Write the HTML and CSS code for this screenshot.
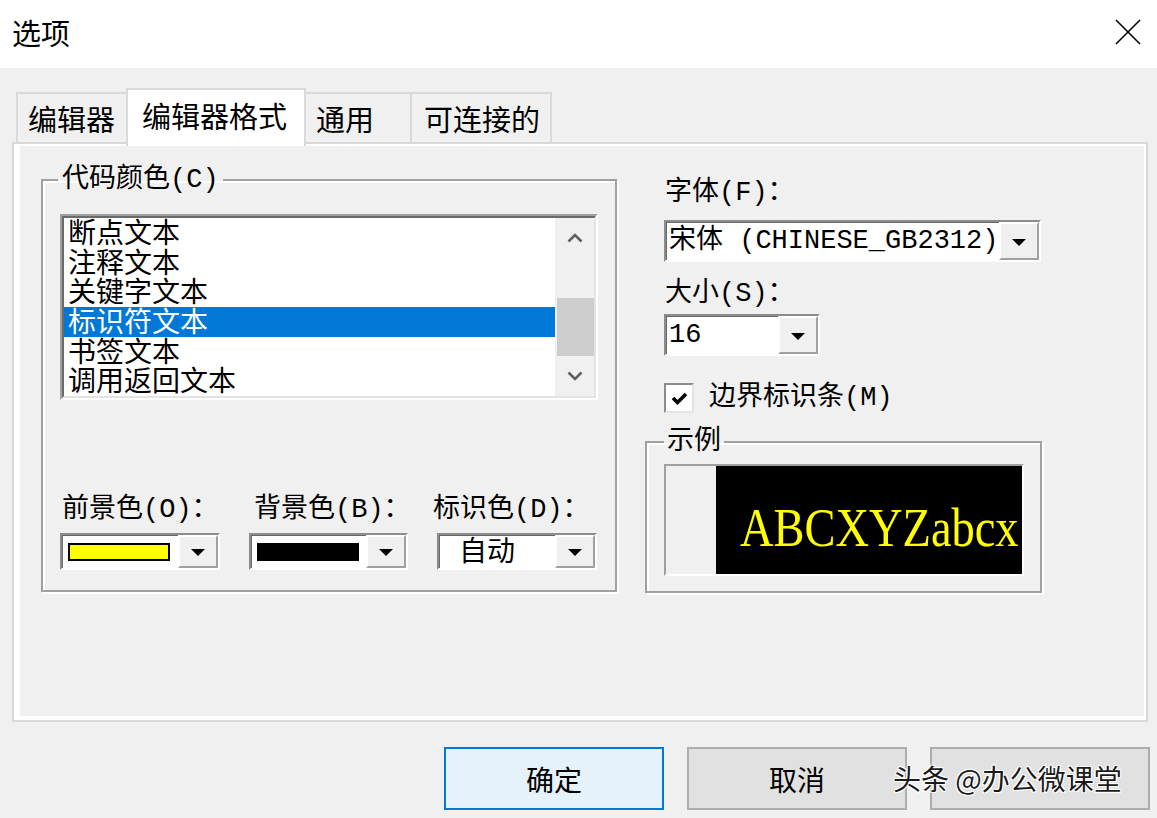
FILE: index.html
```html
<!DOCTYPE html>
<html lang="zh-CN">
<head>
    <meta charset="UTF-8">
    <meta name="viewport" content="width=device-width, initial-scale=1.0">
    <title>选项</title>
    <link rel="stylesheet" href="styles.css">
</head>
<body>
    <div class="titlebar">
        <span class="title">选项</span>
        <svg class="close" width="26" height="26" viewBox="0 0 26 26">
            <path d="M1 1L25 25M25 1L1 25" stroke="#000" stroke-width="1.6" fill="none"/>
        </svg>
    </div>

    <div class="tabs">
        <div class="tab tab-1">编辑器</div>
        <div class="tab tab-2 active">编辑器格式</div>
        <div class="tab tab-3">通用</div>
        <div class="tab tab-4">可连接的</div>
    </div>

    <div class="panel">
        <div class="panel-inner">
            <fieldset class="group code-colors">
                <legend>代码颜色(C)</legend>

                <div class="sunken listbox">
                    <div class="sunken-inner list-body">
                        <ul class="items">
                            <li>断点文本</li>
                            <li>注释文本</li>
                            <li>关键字文本</li>
                            <li class="selected">标识符文本</li>
                            <li>书签文本</li>
                            <li>调用返回文本</li>
                        </ul>
                        <div class="scrollbar">
                            <div class="arrow">
                                <svg width="16" height="10" viewBox="0 0 16 10"><polyline points="1.5,8.5 8,2 14.5,8.5" fill="none" stroke="#606060" stroke-width="2.6"/></svg>
                            </div>
                            <div class="track"><div class="thumb"></div></div>
                            <div class="arrow">
                                <svg width="16" height="10" viewBox="0 0 16 10"><polyline points="1.5,1.5 8,8 14.5,1.5" fill="none" stroke="#606060" stroke-width="2.6"/></svg>
                            </div>
                        </div>
                    </div>
                </div>

                <div class="color-row">
                    <div class="color-col">
                        <div class="field-label">前景色(O)：</div>
                        <div class="combo">
                            <div class="combo-value"><span class="swatch swatch-yellow"></span></div>
                            <div class="drop"><span class="tri"></span></div>
                        </div>
                    </div>
                    <div class="color-col">
                        <div class="field-label shift-right">背景色(B)：</div>
                        <div class="combo">
                            <div class="combo-value"><span class="swatch swatch-black"></span></div>
                            <div class="drop"><span class="tri"></span></div>
                        </div>
                    </div>
                    <div class="color-col">
                        <div class="field-label shift-left">标识色(D)：</div>
                        <div class="combo">
                            <div class="combo-value auto">自动</div>
                            <div class="drop"><span class="tri"></span></div>
                        </div>
                    </div>
                </div>
            </fieldset>

            <div class="right-col">
                <div class="field-label indent">字体(F)：</div>
                <div class="combo combo-font">
                    <div class="combo-value text">宋体 (CHINESE_GB2312)</div>
                    <div class="drop"><span class="tri"></span></div>
                </div>

                <div class="field-label indent size-label">大小(S)：</div>
                <div class="combo combo-size">
                    <div class="combo-value text">16</div>
                    <div class="drop"><span class="tri"></span></div>
                </div>

                <div class="check-row">
                    <div class="checkbox">
                        <svg width="17" height="15" viewBox="0 0 17 15"><polyline points="2,7 6.5,11.5 15,3" fill="none" stroke="#000" stroke-width="3.6"/></svg>
                    </div>
                    <span class="check-label">边界标识条(M)</span>
                </div>

                <fieldset class="group sample">
                    <legend>示例</legend>
                    <div class="preview">
                        <div class="gutter"></div>
                        <div class="sample-text"><span>ABCXYZabcx</span></div>
                    </div>
                </fieldset>
            </div>
        </div>
    </div>

    <div class="buttons">
        <button class="btn primary">确定</button>
        <button class="btn">取消</button>
        <button class="btn"></button>
    </div>

    <div class="watermark">头条 @办公微课堂</div>
</body>
</html>
```

FILE: styles.css
```css
* {
    box-sizing: border-box;
}

body {
    margin: 0;
    width: 1157px;
    height: 818px;
    background: #f0f0f0;
    font-family: "Noto Sans CJK SC", sans-serif;
    color: #000;
    overflow: hidden;
    position: relative;
}

/* title bar */
.titlebar {
    height: 68px;
    background: #fff;
    display: flex;
    align-items: center;
    justify-content: space-between;
    padding: 0 16px 4px 12px;
}

.title {
    font-size: 29px;
    line-height: 1;
}

/* tabs */
.tabs {
    display: flex;
    align-items: flex-end;
    padding: 20px 0 0 16px;
}

.tab {
    height: 50px;
    background: #f0f0f0;
    border-top: 2px solid #d9d9d9;
    border-left: 2px solid #d9d9d9;
    font-size: 29px;
    line-height: 48px;
    white-space: nowrap;
}

.tab-1 { width: 110px; padding-left: 10px; }
.tab-2 { width: 180px; padding-left: 14px; }
.tab-3 { width: 104px; padding-left: 10px; }
.tab-4 { width: 142px; padding-left: 12px; border-right: 2px solid #d9d9d9; }

.tab.active {
    height: 58px;
    margin-bottom: -4px;
    background: #fff;
    border-right: 2px solid #d9d9d9;
    line-height: 50px;
    position: relative;
    z-index: 1;
}

.tab.active + .tab {
    border-left: none;
}

/* tab page */
.panel {
    margin-left: 12px;
    width: 1136px;
    height: 580px;
    border: 2px solid #d9d9d9;
}

.panel-inner {
    height: 100%;
    border-style: solid;
    border-color: #fff;
    border-width: 2px 2px 4px 6px;
    display: flex;
    align-items: flex-start;
    padding: 20px 0 0 21px;
}

/* SimSun-like text */
legend,
.field-label,
.check-label,
.combo-value.text {
    font-family: "Liberation Mono", "Noto Sans CJK SC", monospace;
    font-size: 27px;
    line-height: 28px;
    white-space: nowrap;
}

.group {
    margin: 0;
    min-width: 0;
    border: 2px solid #a0a0a0;
    box-shadow: inset 2px 2px 0 #fff, 2px 2px 0 #fff;
}

.code-colors {
    width: 576px;
    padding: 0 0 20px;
}

.code-colors legend {
    margin-left: 15px;
    padding: 0 4px;
}

/* sunken 3d frames */
.sunken {
    border: 2px solid;
    border-color: #a0a0a0 #fff #fff #a0a0a0;
}

.sunken-inner {
    border: 2px solid;
    border-color: #696969 #e3e3e3 #e3e3e3 #696969;
}

.listbox {
    margin: 20px 17px 0;
    height: 186px;
}

.list-body {
    height: 100%;
    display: flex;
    background: #fff;
}

.items {
    list-style: none;
    margin: 0;
    padding: 0;
    width: 491px;
}

.items li {
    height: 29.67px;
    line-height: 27.67px;
    padding: 2px 0 0 4px;
    font-family: "Liberation Serif", "Noto Sans CJK SC", serif;
    font-size: 28px;
    white-space: nowrap;
}

.items li.selected {
    background: #0078d7;
    color: #fff;
}

.scrollbar {
    flex: 1;
    background: #f0f0f0;
    display: flex;
    flex-direction: column;
}

.arrow {
    height: 40px;
    display: flex;
    align-items: center;
    justify-content: center;
}

.track {
    flex: 1;
    padding: 40px 0 0 2px;
}

.thumb {
    height: 58px;
    background: #cdcdcd;
}

/* colour pickers */
.color-row {
    display: grid;
    grid-template-columns: 160px 159px 160px;
    column-gap: 29px;
    margin: 96px 0 0 17px;
}

.field-label {
    padding-left: 2px;
}

.field-label.shift-right {
    padding-left: 5px;
}

.field-label.shift-left {
    padding-left: 0;
    margin-left: -4px;
}

.combo {
    margin-top: 9px;
    height: 37px;
    display: flex;
    background: #fff;
    border: 2px solid;
    border-color: #8c8c8c #fff #fff #8c8c8c;
    box-shadow: inset 1px 1px 0 #696969;
}

.combo-value {
    flex: 1;
    display: flex;
    align-items: center;
    padding-left: 6px;
}

.combo-value.auto {
    padding-left: 20px;
    font-family: "Liberation Sans", "Noto Sans CJK SC", sans-serif;
    font-size: 28px;
    line-height: 1;
}

.combo-value.text {
    padding-left: 3px;
    line-height: 1;
}

.swatch {
    width: 102px;
    height: 18px;
    border: 2px solid #000;
}

.swatch-yellow { background: #ffff00; }
.swatch-black { background: #000; }

.drop {
    width: 40px;
    background: #f0f0f0;
    border: 2px solid;
    border-color: #fff #a0a0a0 #a0a0a0 #fff;
    display: flex;
    align-items: center;
    justify-content: center;
}

.tri {
    width: 0;
    height: 0;
    border-left: 7px solid transparent;
    border-right: 7px solid transparent;
    border-top: 7px solid #000;
    margin-top: 2px;
}

/* right column */
.right-col {
    width: 397px;
    margin: 13px 0 0 28px;
}

.field-label.indent {
    margin-left: 19px;
    padding-left: 1px;
}

.combo-font {
    margin: 13px 0 0 19px;
    width: 377px;
    height: 42px;
}

.size-label {
    margin-top: 18px;
}

.combo-size {
    margin: 6px 0 0 19px;
    width: 156px;
    height: 42px;
}

.check-row {
    display: flex;
    align-items: center;
    gap: 15px;
    margin: 27px 0 0 19px;
}

.checkbox {
    width: 30px;
    height: 30px;
    background: #fff;
    border: 2px solid;
    border-color: #8c8c8c #e3e3e3 #e3e3e3 #8c8c8c;
    display: flex;
    align-items: center;
    justify-content: center;
}

.sample {
    margin-top: 15px;
    width: 397px;
    padding: 0 0 15px;
}

.sample legend {
    margin-left: 17px;
    padding: 0 3px;
}

.preview {
    margin: 8px 0 0 17px;
    width: 360px;
    height: 112px;
    display: flex;
    border: 2px solid;
    border-color: #a0a0a0 #fff #fff #a0a0a0;
}

.gutter {
    width: 50px;
    background: #f0f0f0;
}

.sample-text {
    flex: 1;
    background: #000;
    overflow: hidden;
    padding: 35px 0 0 24px;
}

.sample-text span {
    display: inline-block;
    font-family: "Liberation Serif", serif;
    font-size: 54px;
    line-height: 54px;
    color: #ffff00;
    white-space: nowrap;
    transform: scaleX(0.86);
    transform-origin: left top;
}

/* dialog buttons */
.buttons {
    display: flex;
    justify-content: flex-end;
    gap: 23px;
    margin-top: 25px;
    padding-right: 7px;
}

.btn {
    width: 220px;
    height: 63px;
    background: #e1e1e1;
    border: 2px solid #adadad;
    font-family: "Noto Sans CJK SC", sans-serif;
    font-size: 28px;
    color: #000;
    padding: 0;
}

.btn.primary {
    background: #e5f1fb;
    border-color: #0078d7;
}

.watermark {
    position: absolute;
    left: 893px;
    top: 759px;
    font-size: 28px;
    line-height: 38px;
    color: #1a1a1a;
    white-space: nowrap;
    text-shadow: 0 0 2px #fff, 1px 1px 0 #fff, -1px -1px 0 #fff, 1px -1px 0 #fff, -1px 1px 0 #fff;
}
```
